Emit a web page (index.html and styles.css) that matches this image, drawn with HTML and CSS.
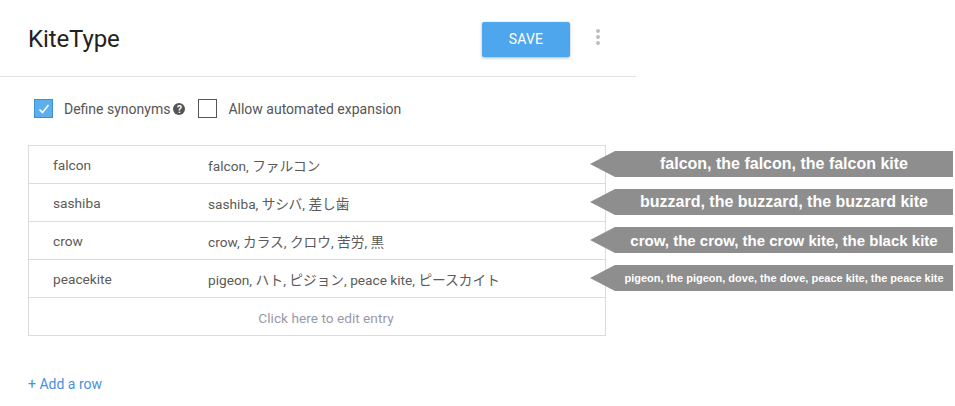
FILE: index.html
```html
<!DOCTYPE html>
<html>
<head>
<meta charset="utf-8">
<link rel="stylesheet" href="styles.css">
</head>
<body>
<div class="page">
  <header class="header">
    <h1 class="title">KiteType</h1>
    <button class="save">SAVE</button>
    <div class="kebab"><span></span><span></span><span></span></div>
  </header>
  <div class="options">
    <label class="opt">
      <span class="box checked"><svg width="14" height="14" viewBox="0 0 14 14"><path d="M2.5 7.5 L5.5 10.5 L11.5 3" fill="none" stroke="#fff" stroke-width="1.6"/></svg></span>
      <span class="opt-text">Define synonyms</span>
      <span class="help">?</span>
    </label>
    <label class="opt">
      <span class="box"></span>
      <span class="opt-text">Allow automated expansion</span>
    </label>
  </div>
  <div class="table-wrap">
    <div class="table">
      <div class="row"><span class="c1">falcon</span><span class="c2">falcon, ファルコン</span></div>
      <div class="row"><span class="c1">sashiba</span><span class="c2">sashiba, サシバ, 差し歯</span></div>
      <div class="row"><span class="c1">crow</span><span class="c2">crow, カラス, クロウ, 苦労, 黒</span></div>
      <div class="row"><span class="c1">peacekite</span><span class="c2">pigeon, ハト, ピジョン, peace kite, ピースカイト</span></div>
      <div class="row edit">Click here to edit entry</div>
    </div>
    <div class="notes">
      <div class="note"><div class="arrow">falcon, the falcon, the falcon kite</div></div>
      <div class="note"><div class="arrow">buzzard, the buzzard, the buzzard kite</div></div>
      <div class="note"><div class="arrow medium">crow, the crow, the crow kite, the black kite</div></div>
      <div class="note"><div class="arrow small">pigeon, the pigeon, dove, the dove, peace kite, the peace kite</div></div>
    </div>
  </div>
  <a class="add" href="#">+ Add a row</a>
</div>
</body>
</html>
```
FILE: styles.css
```css
* { box-sizing: border-box; }
html, body { margin: 0; padding: 0; background: #fff; }
body {
  font-family: Roboto, "Noto Sans CJK JP", sans-serif;
  color: #555;
  width: 955px;
  height: 406px;
  overflow: hidden;
}
.page { width: 955px; }
.header {
  width: 636px;
  height: 77px;
  border-bottom: 1px solid #e3e3e3;
  display: flex;
  align-items: center;
  padding: 0 0 0 28px;
}
.title {
  margin: 2px 0 0 0;
  font-weight: 400;
  font-size: 24px;
  color: #222;
  flex: 1;
  letter-spacing: -0.1px;
}
.save {
  width: 88px;
  height: 35px;
  margin-top: 2px;
  border: none;
  border-radius: 2px;
  background: #4ea6ec;
  color: #fff;
  font-family: Roboto, sans-serif;
  font-size: 14px;
  letter-spacing: 0.2px;
  box-shadow: 0 1px 3px rgba(0,0,0,0.3);
}
.kebab {
  width: 4px;
  margin-left: 26px;
  margin-right: 36px;
  display: flex;
  flex-direction: column;
  gap: 2px;
  margin-top: -3px;
}
.kebab span {
  width: 4px;
  height: 4px;
  border-radius: 50%;
  background: #bdbdbd;
}
.options {
  display: flex;
  align-items: center;
  gap: 13px;
  padding: 22px 0 0 34px;
  height: 41px;
}
.opt { display: flex; align-items: center; font-size: 14px; color: #555; }
.opt-text { margin-top: 1px; }
.box {
  width: 19px;
  height: 19px;
  border: 1px solid #555;
  background: #fff;
  margin-right: 11px;
  display: flex;
  align-items: center;
  justify-content: center;
}
.box.checked { background: #5cafed; border-color: #3b8fd3; }
.help {
  width: 12px;
  height: 12px;
  border-radius: 50%;
  background: #555;
  color: #fff;
  font-size: 10px;
  font-weight: 700;
  display: inline-flex;
  align-items: center;
  justify-content: center;
  margin-left: 3px;
  margin-top: 1px;
}
.table-wrap {
  position: relative;
  margin: 27px 0 0 28px;
  width: 578px;
}
.table {
  border: 1px solid #dcdcdc;
  width: 578px;
}
.row {
  display: flex;
  align-items: center;
  height: 38px;
  border-top: 1px solid #dcdcdc;
  font-size: 13.7px;
  color: #5a5a5a;
  padding-top: 1px;
}
.row:first-child { border-top: none; height: 37px; }
.c1 { width: 154px; padding-left: 24px; }
.c2 { flex: 1; padding-left: 25px; }
.row.edit { justify-content: center; color: #9a9aa8; padding-left: 18px; padding-top: 2px; }
.notes {
  position: absolute;
  left: 562px;
  top: 0;
  display: flex;
  flex-direction: column;
}
.note {
  height: 38px;
  display: flex;
  align-items: center;
}
.arrow {
  width: 363px;
  height: 26px;
  background: #8e8e8e;
  clip-path: polygon(25px 0, 100% 0, 100% 100%, 25px 100%, 0 50%);
  padding-left: 25px;
  display: flex;
  align-items: center;
  justify-content: center;
  color: #fff;
  font-family: "Liberation Sans", Arial, sans-serif;
  font-weight: 700;
  font-size: 16px;
  white-space: nowrap;
}
.arrow.medium { font-size: 15px; }
.arrow.small { font-size: 11px; }
.add {
  display: inline-block;
  margin: 40px 0 0 28px;
  color: #4a8fdc;
  font-size: 14px;
  text-decoration: none;
}
```
